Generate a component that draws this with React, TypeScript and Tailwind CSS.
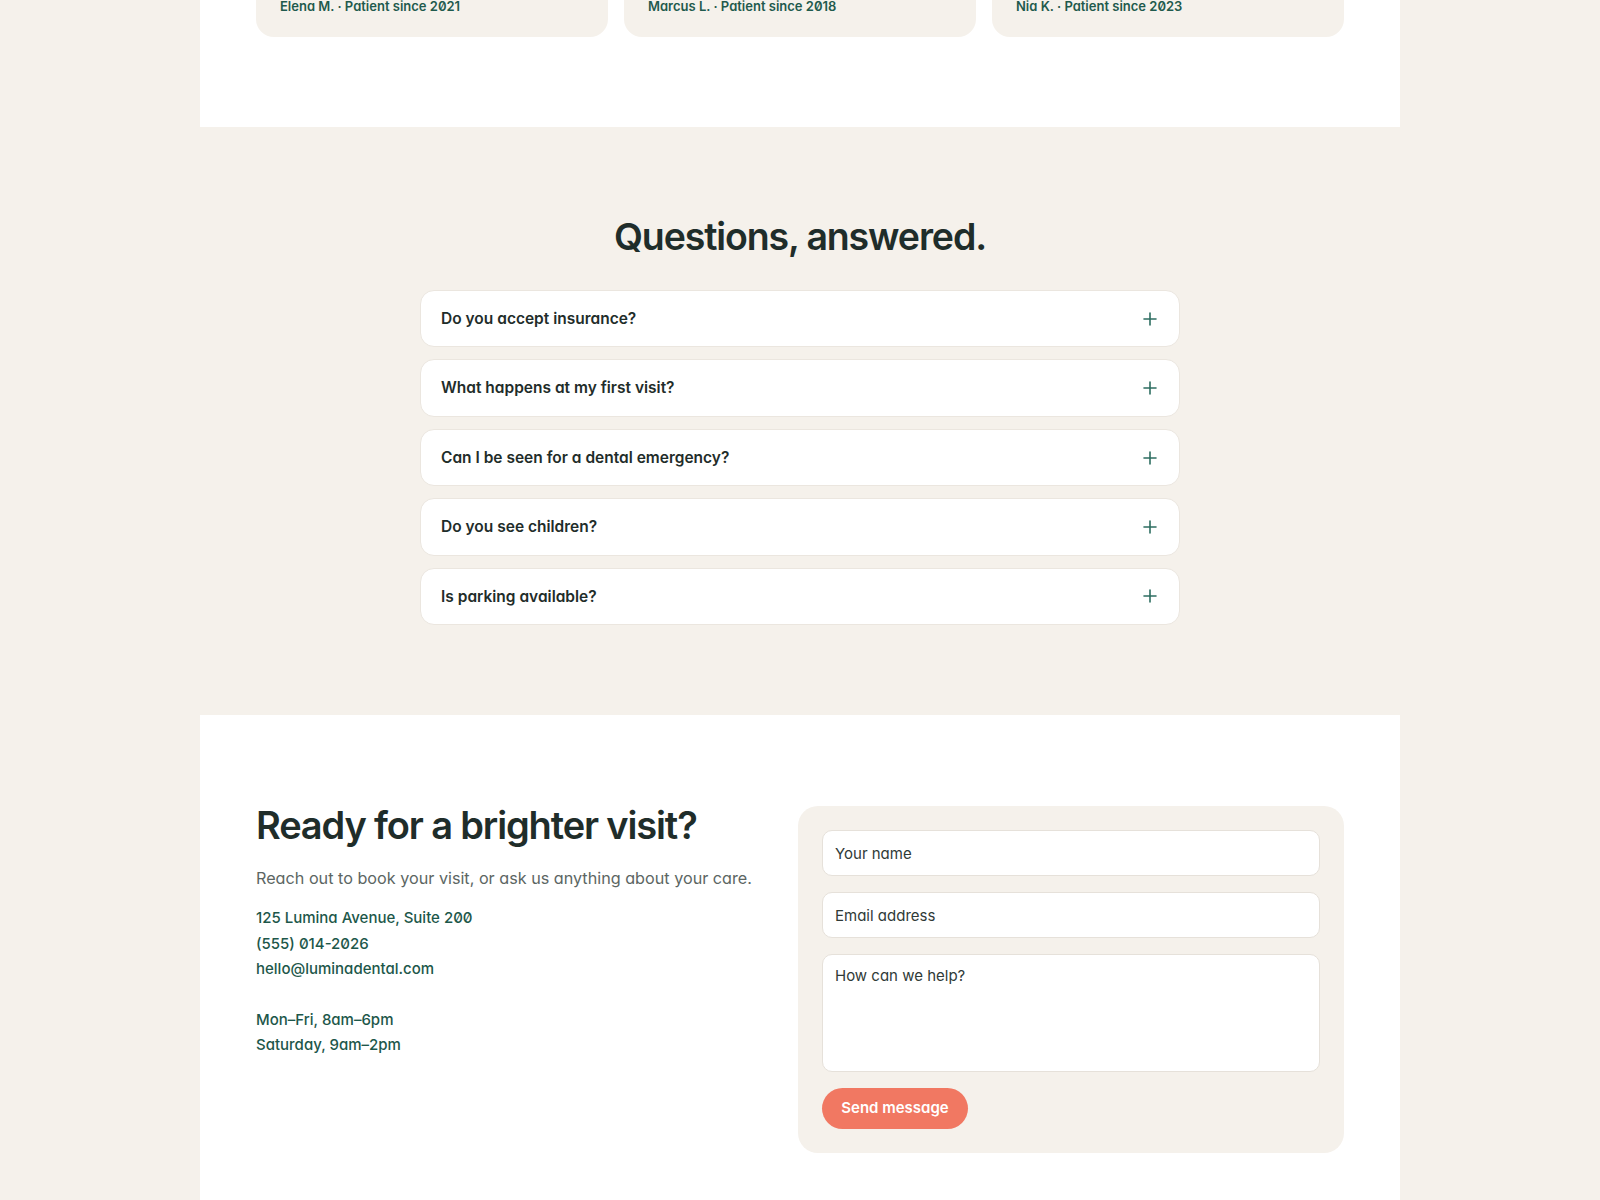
import React from "react";

const faqs = [
  "Do you accept insurance?",
  "What happens at my first visit?",
  "Can I be seen for a dental emergency?",
  "Do you see children?",
  "Is parking available?",
];

const testimonials = [
  "Elena M. · Patient since 2021",
  "Marcus L. · Patient since 2018",
  "Nia K. · Patient since 2023",
];

function PlusIcon() {
  return (
    <svg width="14" height="14" viewBox="0 0 14 14" fill="none" aria-hidden="true">
      <path d="M7 1v12M1 7h12" stroke="#2e6e61" strokeWidth="1.6" strokeLinecap="round" />
    </svg>
  );
}

export default function App() {
  return (
    <div className="min-h-screen overflow-hidden bg-[#f5f1eb] font-['Inter','Noto_Sans',sans-serif] text-[#1f2d2a] [font-feature-settings:'cv11','zero']">
      {/* Testimonials tail */}
      <section className="mx-auto max-w-[1200px] bg-white px-14 pb-[90px]">
        <div className="-mt-[42px] grid grid-cols-3 gap-4">
          {testimonials.map((t) => (
            <div key={t} className="rounded-[18px] bg-[#f5f1eb] px-6 pb-[23px] pt-10">
              <p className="text-[13px] font-semibold leading-4 text-[#1f5a4d]">{t}</p>
            </div>
          ))}
        </div>
      </section>

      {/* FAQ */}
      <section className="pb-[90px] pt-[86px]">
        <h2 className="text-center font-['Inter',sans-serif] text-[37.5px] font-semibold leading-[48px] tracking-[-0.03em] text-[#1f2d2a] [font-feature-settings:normal]">
          Questions, answered.
        </h2>
        <div className="mx-auto mt-[29px] flex max-w-[760px] flex-col gap-3">
          {faqs.map((q) => (
            <div
              key={q}
              className="flex items-center justify-between rounded-[14px] border border-[#ebe6df] bg-white py-4 pl-5 pr-[22px]"
            >
              <span className="text-[15.5px] font-semibold leading-[23.4px] text-[#1f2d2a]">{q}</span>
              <PlusIcon />
            </div>
          ))}
        </div>
      </section>

      {/* Contact */}
      <section className="mx-auto max-w-[1200px] bg-white px-14 pb-16 pt-[91px]">
        <div className="grid grid-cols-[1fr_546px]">
          <div>
            <h2 className="font-['Inter',sans-serif] text-[38px] font-semibold leading-[38px] tracking-[-0.03em] text-[#1f2d2a] [font-feature-settings:normal]">
              Ready for a brighter visit?
            </h2>
            <p className="mt-[22px] text-[16.2px] leading-6 text-[#5c6663]">
              Reach out to book your visit, or ask us anything about your care.
            </p>
            <div className="mt-[15px] text-[15px] font-medium leading-[25.5px] text-[#1d574a]">
              <p>125 Lumina Avenue, Suite 200</p>
              <p>(555) 014-2026</p>
              <p>hello@luminadental.com</p>
            </div>
            <div className="mt-[25px] text-[15px] font-medium leading-[25.5px] text-[#1d574a]">
              <p>Mon–Fri, 8am–6pm</p>
              <p>Saturday, 9am–2pm</p>
            </div>
          </div>
          <form className="flex flex-col gap-4 rounded-[20px] bg-[#f5f1eb] p-6" onSubmit={(e) => e.preventDefault()}>
            <input
              type="text"
              placeholder="Your name"
              className="h-[46px] rounded-[10px] border border-[#e6e1da] bg-white px-3 text-[15px] text-[#1f2d2a] outline-none placeholder:text-[#2f3a37]"
            />
            <input
              type="email"
              placeholder="Email address"
              className="h-[46px] rounded-[10px] border border-[#e6e1da] bg-white px-3 text-[15px] text-[#1f2d2a] outline-none placeholder:text-[#2f3a37]"
            />
            <textarea
              placeholder="How can we help?"
              className="h-[118px] resize-none rounded-[10px] border border-[#e6e1da] bg-white px-3 py-[10px] text-[15px] leading-[22px] text-[#1f2d2a] outline-none placeholder:text-[#2f3a37]"
            />
            <button
              type="submit"
              className="h-[41px] w-[146px] rounded-full bg-[#f17862] text-[15px] font-semibold text-white"
            >
              Send message
            </button>
          </form>
        </div>
      </section>
    </div>
  );
}
